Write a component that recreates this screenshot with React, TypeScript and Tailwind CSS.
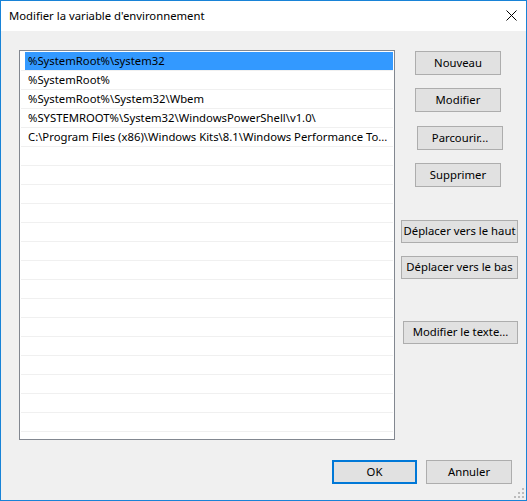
const FONT = "font-['Segoe_UI','Noto_Sans',sans-serif]"

const entries = [
  '%SystemRoot%\\system32',
  '%SystemRoot%',
  '%SystemRoot%\\System32\\Wbem',
  '%SYSTEMROOT%\\System32\\WindowsPowerShell\\v1.0\\',
  'C:\\Program Files (x86)\\Windows Kits\\8.1\\Windows Performance To...',
]

const ROW_COUNT = 20

function Btn({ label, className = '' }: { label: string; className?: string }) {
  return (
    <button
      type="button"
      className={`shrink-0 flex items-center justify-center whitespace-nowrap border border-[#adadad] bg-[#e1e1e1] text-[11.3px] text-black ${className}`}
    >
      {label}
    </button>
  )
}

export default function App() {
  const rows = Array.from({ length: ROW_COUNT }).map((_, i) => entries[i] ?? '')

  return (
    <div
      className={`w-[527px] h-[501px] border border-[#1883d7] bg-[#f0f0f0] flex flex-col overflow-hidden ${FONT}`}
    >
      {/* Title bar */}
      <div className="h-[30px] shrink-0 bg-white flex items-center justify-between pl-[8px] pr-[9px]">
        <span className="text-[11.3px] text-black">Modifier la variable d'environnement</span>
        <svg width="11" height="11" viewBox="0 0 11 11" className="mb-[1px]">
          <path d="M0.5 0.5 L10.5 10.5 M10.5 0.5 L0.5 10.5" stroke="#000" strokeWidth="1" />
        </svg>
      </div>

      {/* Body */}
      <div className="flex-1 flex flex-col pl-[18px] pt-[19px]">
        <div className="flex">
          {/* List box */}
          <div className="shrink-0 w-[376px] h-[390px] border border-[#828790] bg-white pt-[1px] px-[1px] overflow-hidden">
            {rows.map((text, i) => (
              <div key={i} className="h-[19px] border-b border-[#f0f0f0] flex">
                <div
                  className={`flex-1 ml-[4px] h-[18px] flex items-center pl-[3px] text-[11.3px] text-black whitespace-nowrap overflow-hidden ${
                    i === 0 ? 'bg-[#3399ff]' : ''
                  }`}
                >
                  {text}
                </div>
              </div>
            ))}
          </div>

          {/* Action buttons */}
          <div className="flex flex-col items-start">
            <Btn label="Nouveau" className="ml-[20px] mt-[1px] w-[86px] h-[24px]" />
            <Btn label="Modifier" className="ml-[20px] mt-[13px] w-[86px] h-[24px]" />
            <Btn label="Parcourir..." className="ml-[22px] mt-[14px] w-[86px] h-[24px]" />
            <Btn label="Supprimer" className="ml-[20px] mt-[13px] w-[86px] h-[24px]" />
            <Btn label="Déplacer vers le haut" className="ml-[6px] mt-[33px] w-[117px] h-[23px]" />
            <Btn label="Déplacer vers le bas" className="ml-[6px] mt-[13px] w-[117px] h-[23px]" />
            <Btn label="Modifier le texte..." className="ml-[8px] mt-[42px] w-[115px] h-[23px]" />
          </div>
        </div>

        {/* Dialog buttons */}
        <div className="flex justify-end gap-[9px] mt-[20px] pr-[14px]">
          <Btn label="OK" className="w-[85px] h-[24px] !border-2 !border-[#0078d7]" />
          <Btn label="Annuler" className="w-[86px] h-[24px]" />
        </div>
      </div>

      {/* Resize grip */}
      <div className="flex justify-end pr-[2px] pb-[2px]">
        <svg width="10" height="10" viewBox="0 0 10 10">
          <rect x="8" y="0" width="2" height="2" fill="#bcbcbc" />
          <rect x="4" y="4" width="2" height="2" fill="#bcbcbc" />
          <rect x="8" y="4" width="2" height="2" fill="#bcbcbc" />
          <rect x="0" y="8" width="2" height="2" fill="#bcbcbc" />
          <rect x="4" y="8" width="2" height="2" fill="#bcbcbc" />
          <rect x="8" y="8" width="2" height="2" fill="#bcbcbc" />
        </svg>
      </div>
    </div>
  )
}
